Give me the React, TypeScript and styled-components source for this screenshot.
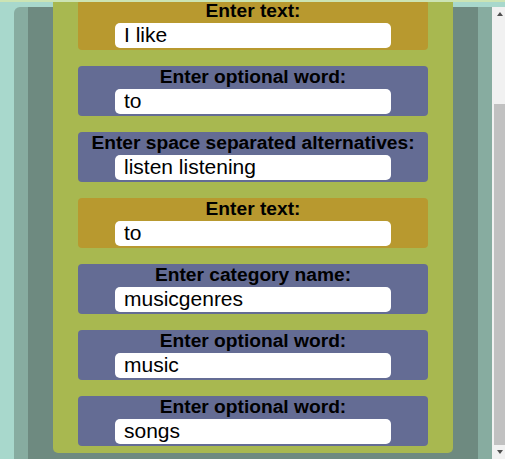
import { useLayoutEffect, useRef } from "react"
import styled, { createGlobalStyle } from "styled-components"

const palette = {
    mint: "#a8d8cc",
    strip: "#cce4b4",
    frameLight: "#87aca0",
    frameDark: "#6e8a80",
    olive: "#a8b850",
    gold: "#b8992f",
    slate: "#646c94",
    track: "#f1f1f1",
    thumb: "#c1c1c1",
    arrow: "#505050",
}

const GlobalStyle = createGlobalStyle`
    html, body {
        margin: 0;
        height: 100%;
        overflow: hidden;
        background: ${palette.mint};
        font-family: "Liberation Sans", Arial, sans-serif;
    }
`

const Page = styled.div`
    height: 100vh;
    display: flex;
    flex-direction: column;
`

const TopStrip = styled.div`
    height: 2px;
    flex-shrink: 0;
    background: ${palette.strip};
`

const Stage = styled.div`
    flex: 1;
    min-height: 0;
    display: grid;
    grid-template: 1fr / 1fr 13px;
`

const Frame = styled.div`
    grid-area: 1 / 1;
    margin: 5px 0 0 14px;
    padding: 0 14px;
    display: flex;
    background: ${palette.frameLight};
    border-top-left-radius: 6px;
`

const FrameInner = styled.div`
    flex: 1;
    background: ${palette.frameDark};
`

const Scroller = styled.div`
    grid-area: 1 / 1;
    min-height: 0;
    overflow-y: scroll;
    scrollbar-width: none;
    z-index: 1;

    &::-webkit-scrollbar {
        display: none;
    }
`

const Column = styled.div`
    margin: 0 39px 6px 53px;
    padding: 47px 25px 7px;
    display: flex;
    flex-direction: column;
    gap: 16px;
    background: ${palette.olive};
    border-radius: 0 0 5px 5px;
`

const Card = styled.div<{ $tone: "gold" | "slate" }>`
    height: 50px;
    box-sizing: border-box;
    padding-bottom: 2px;
    display: flex;
    flex-direction: column;
    align-items: center;
    border-radius: 4px;
    background: ${({ $tone }) => ($tone === "gold" ? palette.gold : palette.slate)};
`

const Label = styled.div`
    font-size: 19.2px;
    font-weight: bold;
    line-height: normal;
    color: #000;
    white-space: nowrap;
`

const Field = styled.input`
    width: 276px;
    height: 25px;
    margin-top: 1px;
    padding: 0 9px 2px;
    box-sizing: border-box;
    border: none;
    border-radius: 5px;
    outline: none;
    background: #fff;
    color: #000;
    font-family: "Liberation Sans", Arial, sans-serif;
    font-size: 21px;
`

const ScrollBar = styled.div`
    grid-area: 1 / 2;
    margin-top: 5px;
    display: flex;
    flex-direction: column;
    background: ${palette.track};
`

const ArrowButton = styled.div<{ $dir: "up" | "down" }>`
    height: 14px;
    flex-shrink: 0;
    display: flex;
    align-items: center;
    justify-content: center;
    padding-left: 3px;

    &::before {
        content: "";
        border-left: 3.5px solid transparent;
        border-right: 3.5px solid transparent;
        ${({ $dir }) =>
            $dir === "up"
                ? `border-bottom: 4px solid ${palette.arrow};`
                : `border-top: 4px solid ${palette.arrow};`}
    }
`

const Track = styled.div`
    flex: 1;
    display: flex;
    flex-direction: column;
    justify-content: flex-end;
`

const Thumb = styled.div`
    height: 341px;
    margin-left: 2px;
    background: ${palette.thumb};
`

const fields: { label: string; value: string; tone: "gold" | "slate" }[] = [
    { label: "Enter category name:", value: "phrases", tone: "slate" },
    { label: "Enter text:", value: "I like", tone: "gold" },
    { label: "Enter optional word:", value: "to", tone: "slate" },
    { label: "Enter space separated alternatives:", value: "listen listening", tone: "slate" },
    { label: "Enter text:", value: "to", tone: "gold" },
    { label: "Enter category name:", value: "musicgenres", tone: "slate" },
    { label: "Enter optional word:", value: "music", tone: "slate" },
    { label: "Enter optional word:", value: "songs", tone: "slate" },
]

export default function App() {
    const scrollRef = useRef<HTMLDivElement>(null)

    useLayoutEffect(() => {
        const el = scrollRef.current
        if (el) el.scrollTop = el.scrollHeight
    }, [])

    return (
        <>
            <GlobalStyle />
            <Page>
                <TopStrip />
                <Stage>
                    <Frame>
                        <FrameInner />
                    </Frame>
                    <Scroller ref={scrollRef}>
                        <Column>
                            {fields.map((f, i) => (
                                <Card key={i} $tone={f.tone}>
                                    <Label>{f.label}</Label>
                                    <Field defaultValue={f.value} readOnly />
                                </Card>
                            ))}
                        </Column>
                    </Scroller>
                    <ScrollBar>
                        <ArrowButton $dir="up" />
                        <Track>
                            <Thumb />
                        </Track>
                        <ArrowButton $dir="down" />
                    </ScrollBar>
                </Stage>
            </Page>
        </>
    )
}
